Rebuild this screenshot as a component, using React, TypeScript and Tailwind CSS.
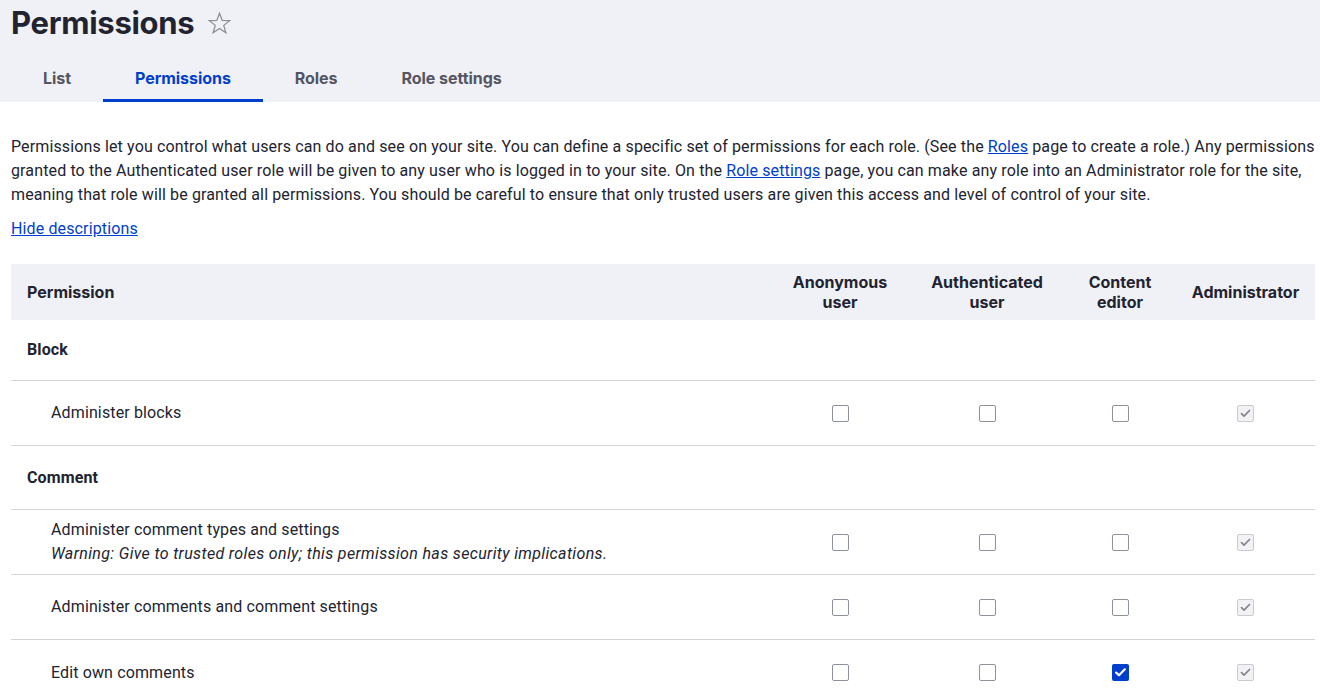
import React from "react";

type State = "off" | "on" | "locked";

function Checkbox({ state }: { state: State }) {
  if (state === "on") {
    return (
      <span className="flex h-[17px] w-[17px] items-center justify-center rounded-[2px] bg-[#003ecc]">
        <svg width="11" height="9" viewBox="0 0 11 9" fill="none">
          <path d="M1.2 4.6 L4 7.3 L9.8 1.3" stroke="#fff" strokeWidth="2.2" strokeLinecap="round" strokeLinejoin="round" />
        </svg>
      </span>
    );
  }
  if (state === "locked") {
    return (
      <span className="flex h-[17px] w-[17px] items-center justify-center rounded-[2px] border border-[#c9cbd0] bg-[#f2f2f4]">
        <svg width="11" height="9" viewBox="0 0 11 9" fill="none">
          <path d="M1.5 4.7 L4 7.1 L9.5 1.5" stroke="#82858f" strokeWidth="1.7" strokeLinecap="round" strokeLinejoin="round" />
        </svg>
      </span>
    );
  }
  return <span className="block h-[17px] w-[17px] rounded-[2px] border border-[#8e929c] bg-white" />;
}

const grid = "grid grid-cols-[1fr_140px_154px_112px_139px]";

function GroupRow({ label, h }: { label: string; h: string }) {
  return (
    <div className={`${grid} ${h} items-center border-b border-[#d3d4d9]`}>
      <div className="pl-4 font-bold">{label}</div>
    </div>
  );
}

function ItemRow({
  label,
  warning,
  states,
  last,
}: {
  label: string;
  warning?: string;
  states: State[];
  last?: boolean;
}) {
  return (
    <div className={`${grid} h-[65px] items-center ${last ? "" : "border-b border-[#d3d4d9]"}`}>
      <div className="pl-10">
        <div>{label}</div>
        {warning && <div className="italic tracking-[0.35px]">{warning}</div>}
      </div>
      {states.map((s, i) => (
        <div key={i} className="flex justify-center">
          <Checkbox state={s} />
        </div>
      ))}
    </div>
  );
}

export default function App() {
  return (
    <div className="min-h-[694px] bg-white font-['Roboto','Liberation_Sans',sans-serif] text-[16px] leading-6 tracking-[0.13px] text-[#222330]">
      <header className="bg-[#f0f1f6] px-[11px] pt-[1px]">
        <div className="flex h-[44px] items-center gap-[13px]">
          <h1 className="font-['Inter','Liberation_Sans',sans-serif] text-[31px] font-bold leading-10 tracking-[-0.3px] text-[#222330]">
            Permissions
          </h1>
          <svg width="25" height="25" viewBox="0 0 24 24" fill="none" className="mt-[1px]">
            <path
              d="M12 2.2 L14.6 9.1 L21.8 9.3 L16.1 13.8 L18.1 20.9 L12 16.8 L5.9 20.9 L7.9 13.8 L2.2 9.3 L9.4 9.1 Z"
              stroke="#8b8d95"
              strokeWidth="1.2"
              strokeLinejoin="miter"
            />
          </svg>
        </div>
        <nav className="mt-[9px] flex h-12 font-['Inter','Liberation_Sans',sans-serif] text-[16px] font-bold tracking-[-0.05px]">
          <a className="flex items-center px-8 text-[#545560]">List</a>
          <a className="flex items-center border-b-[3px] border-[#003ecc] px-8 pt-[3px] text-[#003ecc]">Permissions</a>
          <a className="flex items-center px-8 text-[#545560]">Roles</a>
          <a className="flex items-center px-8 text-[#545560]">Role settings</a>
        </nav>
      </header>

      <main className="pl-[11px] pr-[5px] pt-[33px]">
        <p>
          Permissions let you control what users can do and see on your site. You can define a specific set of
          permissions for each role. (See the <a className="text-[#003ecc] underline">Roles</a> page to create a
          role.) Any permissions granted to the Authenticated user role will be given to any user who is logged in to
          your site. On the <a className="text-[#003ecc] underline">Role settings</a> page, you can make any role into an
          Administrator role for the site, meaning that role will be granted all permissions. You should be careful to
          ensure that only trusted users are given this access and level of control of your site.
        </p>
        <div className="mt-[10px]">
          <a className="text-[#003ecc] underline">Hide descriptions</a>
        </div>

        <div className="mt-[23px]">
          <div
            className={`${grid} h-14 items-center bg-[#f0f1f6] font-['Inter','Liberation_Sans',sans-serif] text-[16px] font-bold leading-5 tracking-normal`}
          >
            <div className="pl-4">Permission</div>
            <div className="text-center">
              Anonymous
              <br />
              user
            </div>
            <div className="text-center">
              Authenticated
              <br />
              user
            </div>
            <div className="text-center">
              Content
              <br />
              editor
            </div>
            <div className="text-center">Administrator</div>
          </div>

          <GroupRow label="Block" h="h-[61px]" />
          <ItemRow label="Administer blocks" states={["off", "off", "off", "locked"]} />
          <GroupRow label="Comment" h="h-16" />
          <ItemRow
            label="Administer comment types and settings"
            warning="Warning: Give to trusted roles only; this permission has security implications."
            states={["off", "off", "off", "locked"]}
          />
          <ItemRow label="Administer comments and comment settings" states={["off", "off", "off", "locked"]} />
          <ItemRow label="Edit own comments" states={["off", "off", "on", "locked"]} last />
        </div>
      </main>
    </div>
  );
}
